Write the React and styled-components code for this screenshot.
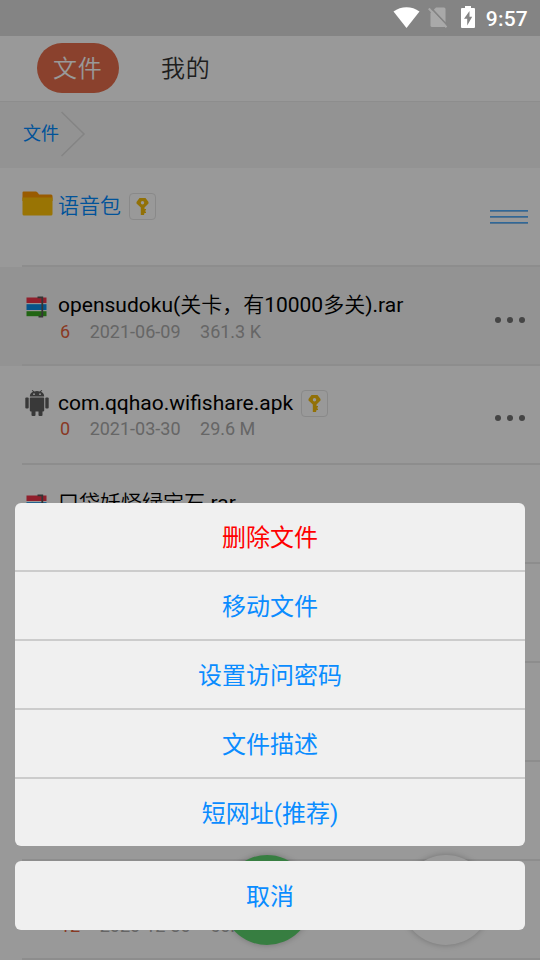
import React from "react";
import styled, { createGlobalStyle } from "styled-components";

const GlobalStyle = createGlobalStyle`
* {
    box-sizing: border-box;
}

html, body, #root {
    height: 100%;
}

body {
    margin: 0;
    overflow: hidden;
    font-family: Roboto, "Noto Sans CJK SC", sans-serif;
    background: #fff;
}
`;

const Screen = styled.div`
    position: relative;
    width: 540px;
    height: 960px;
    overflow: hidden;
    display: flex;
    flex-direction: column;
`;

const StatusBar = styled.div`
    position: relative;
    z-index: 3;
    flex: none;
    height: 36px;
    background: #848484;
    color: #fff;
    display: flex;
    justify-content: flex-end;
    align-items: center;
    padding-right: 12px;

    & svg {
        display: block;
    }
`;

const Clock = styled.span`
    font-size: 21px;
    font-weight: 500;
    line-height: 36px;
    padding-top: 2px;
    margin-left: 11px;
    letter-spacing: 0.2px;
`;

const Tabs = styled.div`
    flex: none;
    height: 66px;
    padding: 7px 0 0 37px;
    border-bottom: 1px solid #ebebeb;
    display: flex;
    align-items: flex-start;
    gap: 30px;
`;

const Tab = styled.div`
    height: 50px;
    line-height: 52px;
    width: 82px;
    padding-left: ${props => props.$active ? "16px" : "12px"};
    border-radius: 25px;
    font-size: 24px;
    letter-spacing: 0.8px;
    font-weight: 350;
    background: ${props => props.$active ? "#e66d4b" : "transparent"};
    color: ${props => props.$active ? "#fff" : "#333"};
`;

const Breadcrumb = styled.div`
    flex: none;
    height: 66px;
    background: #f5f5f5;
    padding-left: 23px;
    display: flex;
    align-items: flex-start;
`;

const Crumb = styled.span`
    font-size: 18px;
    line-height: 64px;
    color: #008aff;
    margin-right: 2px;
`;

const Chevron = styled.svg`
    display: block;
    margin-top: 9px;
`;

const Row = styled.div`
    flex: none;
    height: 99px;
    padding-left: 22px;
    background: ${props => props.$shaded ? "#f5f5f5" : "#fff"};
`;

const RowInner = styled.div`
    height: 99px;
    display: flex;
    border-bottom: 2px solid #ebebeb;
`;

const IconSlot = styled.div`
    width: 36px;
    padding: ${props => props.$top}px 0 0 ${props => props.$left || 0}px;

    & svg {
        display: block;
    }
`;

const RowText = styled.div`
    flex: 1;
    padding-top: ${props => props.$top}px;
`;

const Title = styled.div`
    display: flex;
    height: 27px;
    line-height: 27px;
    font-size: 21px;
    white-space: nowrap;
    color: ${props => props.$link ? "#008aff" : "#000"};

    & > span:first-child {
        font-family: Roboto, "Noto Sans CJK SC DemiLight", "Noto Sans CJK SC", sans-serif;
    }
`;

const Meta = styled.div`
    display: flex;
    gap: 19.5px;
    padding: ${props => props.$gap}px 0 0 2px;
    line-height: 24px;
    font-size: 18px;
    color: #aaa;
`;

const Count = styled.span`
    color: #e5613c;
`;

const KeyBadge = styled.span`
    width: 27px;
    height: 27px;
    margin: ${props => props.$top}px 0 0 8px;
    border: 1px solid #e5e5e5;
    border-radius: 4px;
    display: flex;
    align-items: center;
    justify-content: center;
`;

const Bars = styled.div`
    width: 38px;
    margin: 42px 12px 0 0;
    display: flex;
    flex-direction: column;
    gap: 4px;
`;

const Bar = styled.i`
    height: 2px;
    background: #4fadff;
    border-bottom: 1px solid #8cbfec;
`;

const Dots = styled.div`
    display: flex;
    gap: 6px;
    margin: ${props => props.$top}px 15px 0 0;
`;

const Dot = styled.i`
    width: 6px;
    height: 6px;
    border-radius: 50%;
    background: #737373;
`;

const Fab = styled.div`
    position: absolute;
    left: ${props => props.$left}px;
    top: 855px;
    width: 90px;
    height: 90px;
    border-radius: 50%;
    background: ${props => props.$color};
    box-shadow: 0 0 6px rgba(0, 0, 0, 0.25);
`;

const Overlay = styled.div`
    position: absolute;
    inset: 0;
    z-index: 2;
    background: rgba(0, 0, 0, 0.4);
    display: flex;
    flex-direction: column;
    justify-content: flex-end;
    gap: 15px;
    padding: 0 15px 30px;
`;

const Sheet = styled.div`
    border-radius: 6px;
    background: #f0f0f0;
    overflow: hidden;
`;

const SheetItem = styled.div`
    height: ${props => props.$single ? 69 : 67}px;
    line-height: ${props => props.$single ? 72 : 70}px;
    text-align: center;
    font-size: 24px;
    color: ${props => props.$danger ? "#f00" : "#0a8cff"};

    & + & {
        height: 69px;
        border-top: 2px solid #ccc;
    }
`;

const WifiIcon = () => (
  <svg width="27" height="21" viewBox="0 0 27 21">
    <path d="M13.5 21 L0.5 4.6 C8 -1.2 19 -1.2 26.5 4.6 Z" fill="#fff"/>
  </svg>
);

const NoSimIcon = () => (
  <svg width="20" height="21" viewBox="0 0 20 21">
    <path d="M8 0.500 H16 Q17.500 0.500 17.500 2 V18.500 Q17.500 20 16 20 H4 Q2.500 20 2.500 18.500 V6 Z" fill="#a9a9a9"/>
    <path d="M2.500 0.500 L19.500 18.500" stroke="#848484" strokeWidth="1.800"/>
    <path d="M0.800 1.500 L18.500 20.200" stroke="#a9a9a9" strokeWidth="2"/>
  </svg>
);

const BatteryIcon = () => (
  <svg width="14" height="22" viewBox="0 0 14 22">
    <path d="M4 0 H10 V2 H13 Q14 2 14 3 V21 Q14 22 13 22 H1 Q0 22 0 21 V3 Q0 2 1 2 H4 Z" fill="#fff"/>
    <path d="M8.500 5 L3 12.800 H6.200 V19.500 L11.200 10.800 H8.500 Z" fill="#848484"/>
  </svg>
);

const StatusIcons = styled.div`
    display: flex;
    align-items: center;
    gap: 8px;
    margin-top: -2px;

    & > *:last-child {
        margin-left: 5px;
    }
`;

const FolderIcon = () => (
  <svg width="31" height="25" viewBox="0 0 31 25">
    <path d="M0.500 1.500 Q0.500 0.500 1.500 0.500 H14 Q15 0.500 16 2 L17 3.500 H29 Q30.500 3.500 30.500 5 V10 H0.500 Z" fill="#ff9800"/>
    <path d="M0.500 6.500 H30.500 V23 Q30.500 24.500 29 24.500 H2 Q0.500 24.500 0.500 23 Z" fill="#ffc107"/>
  </svg>
);

const RarIcon = () => (
  <svg width="21" height="22" viewBox="0 0 21 22">
    <rect x="0.500" y="1.500" width="20" height="5.500" fill="#f0344a"/>
    <rect x="0.500" y="8.200" width="20" height="5.800" fill="#0a8de8"/>
    <rect x="0.500" y="15.200" width="20" height="5" fill="#38a821"/>
    <path d="M11.500 1.300 H16.300 V20.700 H12.500" fill="none" stroke="#595959" strokeWidth="1.800"/>
  </svg>
);

const AndroidIcon = () => (
  <svg width="24" height="27" viewBox="0 0 24 27" fill="#606060">
    <path d="M4.800 6.500 Q5 3 8 1.800 L6.700 0.500 L7.400 0 L9.300 1.500 Q12 0.700 14.700 1.500 L16.600 0 L17.300 0.500 L16 1.800 Q19 3 19.200 6.500 Z"/>
    <rect x="4.800" y="7.600" width="14.400" height="13.800" rx="0.800"/>
    <rect x="0.300" y="7.600" width="3.400" height="11" rx="1"/>
    <rect x="20.300" y="7.600" width="3.400" height="11" rx="1"/>
    <rect x="6.500" y="20" width="4" height="6" rx="1"/>
    <rect x="13.500" y="20" width="4" height="6" rx="1"/>
    <circle cx="9" cy="4.200" r="0.900" fill="#fff"/>
    <circle cx="15" cy="4.200" r="0.900" fill="#fff"/>
  </svg>
);

const KeyIcon = () => (
  <svg width="13" height="17" viewBox="0 0 13 17">
    <path fillRule="evenodd" d="M3.500 0 H9.500 L12.500 4 V5.500 L8.500 9.500 V11 H10 V12.500 H9 V13.500 H10 V15 H8.500 L8 17 H4.800 V9.500 L0.500 5.500 V4 Z M6.500 3 A1.700 1.700 0 1 0 6.500 6.400 A1.700 1.700 0 1 0 6.500 3 Z" fill="#f4bd0d"/>
  </svg>
);

const files = [
  { id: 1, name: "opensudoku(关卡，有10000多关).rar", count: 6, date: "2021-06-09", size: "361.3 K", shaded: true },
  { id: 2, name: "com.qqhao.wifishare.apk", count: 0, date: "2021-03-30", size: "29.6 M", apk: true, locked: true },
  { id: 3, name: "口袋妖怪绿宝石.rar" },
  { id: 4 },
  { id: 5 },
  { id: 6 },
  { id: 7, count: 12, date: "2020-12-30", size: "60.8" }
];

const actions = ["删除文件", "移动文件", "设置访问密码", "文件描述", "短网址(推荐)"];

const FileRow = ({ file }) => (
  <Row $shaded={file.shaded}>
    <RowInner>
      <IconSlot $top={file.apk ? 24 : 29} $left={file.apk ? 3 : 4}>
        {file.apk ? <AndroidIcon/> : <RarIcon/>}
      </IconSlot>
      <RowText $top={file.apk ? 24 : 25}>
        <Title>
          <span>{file.name}</span>
          {file.locked && <KeyBadge $top={0}><KeyIcon/></KeyBadge>}
        </Title>
        {file.date && (
          <Meta $gap={file.apk ? 0 : 1}>
            <Count>{file.count}</Count>
            <span>{file.date}</span>
            <span>{file.size}</span>
          </Meta>
        )}
      </RowText>
      <Dots $top={file.apk ? 49 : 50}><Dot/><Dot/><Dot/></Dots>
    </RowInner>
  </Row>
);

const App = () => (
  <React.Fragment>
    <GlobalStyle/>
    <Screen>
      <StatusBar>
        <StatusIcons>
          <WifiIcon/>
          <NoSimIcon/>
          <BatteryIcon/>
        </StatusIcons>
        <Clock>9:57</Clock>
      </StatusBar>
      <Tabs>
        <Tab $active>文件</Tab>
        <Tab>我的</Tab>
      </Tabs>
      <Breadcrumb>
        <Crumb>文件</Crumb>
        <Chevron width="25" height="46" viewBox="0 0 25 46">
          <path d="M0.500 1 L23 23 L0.500 45" fill="none" stroke="#dcdcdc" strokeWidth="1.500"/>
        </Chevron>
      </Breadcrumb>
      <Row>
        <RowInner>
          <IconSlot $top={23}><FolderIcon/></IconSlot>
          <RowText $top={25}>
            <Title $link>
              <span>语音包</span>
              <KeyBadge $top={0}><KeyIcon/></KeyBadge>
            </Title>
          </RowText>
          <Bars><Bar/><Bar/><Bar/></Bars>
        </RowInner>
      </Row>
      {files.map(file => <FileRow key={file.id} file={file}/>)}
      <Fab $left={222} $color="#5dd36d"/>
      <Fab $left={401} $color="#fff"/>
      <Overlay>
        <Sheet>
          {actions.map((label, i) => <SheetItem key={label} $danger={i === 0}>{label}</SheetItem>)}
        </Sheet>
        <Sheet>
          <SheetItem $single>取消</SheetItem>
        </Sheet>
      </Overlay>
    </Screen>
  </React.Fragment>
);

export default App;
